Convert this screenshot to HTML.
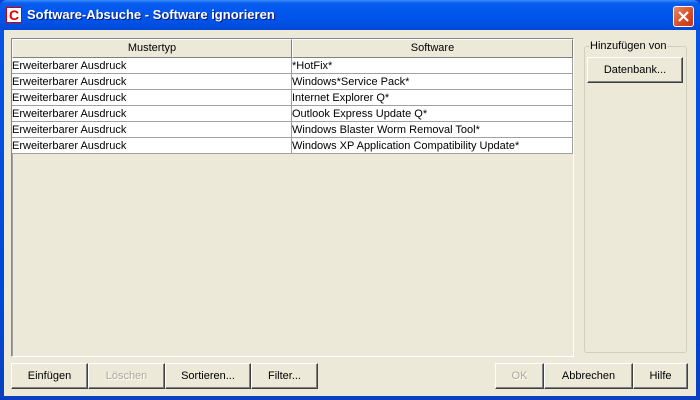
<!DOCTYPE html>
<html><head><meta charset="utf-8"><style>
*{box-sizing:border-box;margin:0;padding:0}
body{width:700px;height:400px;overflow:hidden;font-family:Tahoma,"Liberation Sans",sans-serif;font-size:11px;position:relative;background:#0842d4}
.win{position:absolute;left:0;top:0;width:700px;height:400px;background:linear-gradient(#0a5ae6,#0554e4 8%,#0047d6 80%,#0a3fbf);border-radius:7px 7px 0 0}
.title{position:absolute;left:0;top:0;width:700px;height:30px;border-radius:7px 7px 0 0;background:linear-gradient(#3d8dfa 0,#0a5fef 3px,#0058ee 10px,#0052e6 22px,#0048d4 30px)}
.ttext{position:absolute;left:27px;top:7px;color:#fff;font-weight:bold;font-size:13px;text-shadow:1px 1px 0 #0a1a80;font-family:"Liberation Sans",sans-serif}
.icon{position:absolute;left:6px;top:7px;width:16px;height:16px;background:#fff;border:1px solid #c00;color:#d00;font-weight:bold;font-size:14px;line-height:14px;text-align:center;font-family:"Liberation Sans",sans-serif}
.close{position:absolute;left:673px;top:6px;width:21px;height:21px;border:1px solid #fff;border-radius:3px;background:linear-gradient(135deg,#e8876b,#d74a22 60%,#c0391a)}
.client{position:absolute;left:4px;top:30px;width:692px;height:366px;background:#ece9d8}
.abs{position:absolute}
.table{left:11px;top:38px;width:563px;height:319px;border:1px solid #828790;border-right-color:#fff;border-bottom-color:#fff;box-shadow:inset 1px 1px 0 #a0a0a0;background:#ece9d8}
.hd{position:absolute;top:39px;height:19px;background:#ece9d8;border:1px solid;border-color:#fff #808080 #808080 #fff;text-align:center;line-height:17px;color:#000}
.row{position:absolute;height:16px;background:#fff;border-bottom:1px solid #a0a0a0;line-height:17px;white-space:nowrap;overflow:hidden}
.c1{left:12px;width:280px;border-right:1px solid #a0a0a0}
.c2{left:292px;width:281px;border-right:1px solid #a0a0a0}
.btn{position:absolute;height:26px;border:1px solid;border-color:#fff #404040 #404040 #fff;box-shadow:inset -1px -1px 0 #808080;background:#ece9d8;text-align:center;line-height:24px;color:#000}
.dis{color:#aca899;text-shadow:1px 1px 0 #fff}
.grp{left:584px;top:46px;width:103px;height:307px;border:1px solid #d0d0bf;border-radius:3px}
.gl{left:589px;top:40px;background:#ece9d8;padding:0 1px;color:#000}
</style></head><body>
<div class="win"></div>
<div class="title"><div class="icon">C</div><div class="ttext">Software-Absuche - Software ignorieren</div>
<div class="close"><svg width="19" height="19" viewBox="0 0 19 19"><path d="M5 5L14 14M14 5L5 14" stroke="#fff" stroke-width="2.2"/></svg></div></div>
<div class="client"></div>
<div class="abs table"></div>
<div class="hd" style="left:12px;width:280px">Mustertyp</div>
<div class="hd" style="left:292px;width:281px">Software</div>

<div class="row c1" style="top:58px">Erweiterbarer Ausdruck</div><div class="row c2" style="top:58px">*HotFix*</div>
<div class="row c1" style="top:74px">Erweiterbarer Ausdruck</div><div class="row c2" style="top:74px">Windows*Service Pack*</div>
<div class="row c1" style="top:90px">Erweiterbarer Ausdruck</div><div class="row c2" style="top:90px">Internet Explorer Q*</div>
<div class="row c1" style="top:106px">Erweiterbarer Ausdruck</div><div class="row c2" style="top:106px">Outlook Express Update Q*</div>
<div class="row c1" style="top:122px">Erweiterbarer Ausdruck</div><div class="row c2" style="top:122px">Windows Blaster Worm Removal Tool*</div>
<div class="row c1" style="top:138px">Erweiterbarer Ausdruck</div><div class="row c2" style="top:138px">Windows XP Application Compatibility Update*</div>

<div class="abs grp"></div>
<div class="abs gl">Hinzufügen von</div>
<div class="btn" style="left:587px;top:57px;width:96px">Datenbank...</div>

<div class="btn" style="left:11px;top:363px;width:77px">Einfügen</div>
<div class="btn dis" style="left:88px;top:363px;width:77px">Löschen</div>
<div class="btn" style="left:165px;top:363px;width:86px">Sortieren...</div>
<div class="btn" style="left:251px;top:363px;width:67px">Filter...</div>
<div class="btn dis" style="left:495px;top:363px;width:49px">OK</div>
<div class="btn" style="left:544px;top:363px;width:89px">Abbrechen</div>
<div class="btn" style="left:633px;top:363px;width:55px">Hilfe</div>
</body></html>
